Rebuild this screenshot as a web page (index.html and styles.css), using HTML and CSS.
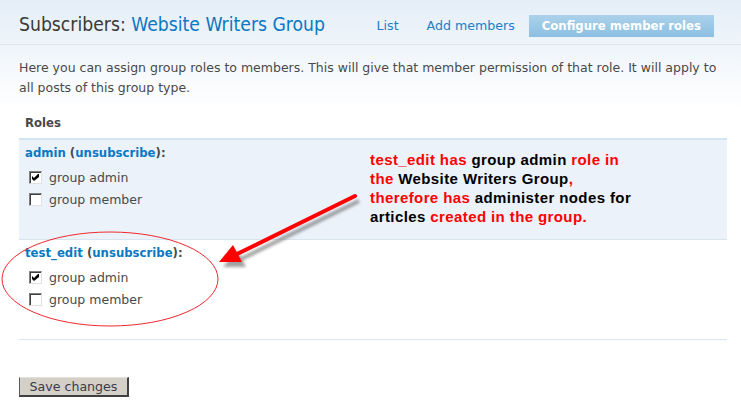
FILE: index.html
```html
<!DOCTYPE html>
<html>
<head>
<meta charset="utf-8">
<link rel="stylesheet" href="styles.css">
</head>
<body>
<div class="page">
  <div class="header">
    <h1 class="title">Subscribers: <a href="#" class="title-link">Website Writers Group</a></h1>
    <ul class="tabs">
      <li class="tab"><a href="#">List</a></li>
      <li class="tab"><a href="#">Add members</a></li>
      <li class="tab active"><a href="#">Configure member roles</a></li>
    </ul>
  </div>
  <div class="content">
    <p class="intro">Here you can assign group roles to members. This will give that member permission of that role. It will apply to all posts of this group type.</p>
    <table class="roles">
      <thead>
        <tr><th>Roles</th></tr>
      </thead>
      <tbody>
        <tr class="odd">
          <td>
            <div class="member"><a href="#">admin</a> (<a href="#">unsubscribe</a>):</div>
            <div class="option"><span class="box"><svg width="11" height="11" viewBox="0 0 11 11"><path d="M2 4 L4 6 L8 2 L9 2 L9 5 L4 9 L2 7 Z" fill="#000"/></svg></span>group admin</div>
            <div class="option"><span class="box"></span>group member</div>
          </td>
        </tr>
        <tr class="even">
          <td>
            <div class="member"><a href="#">test_edit</a> (<a href="#">unsubscribe</a>):</div>
            <div class="option"><span class="box"><svg width="11" height="11" viewBox="0 0 11 11"><path d="M2 4 L4 6 L8 2 L9 2 L9 5 L4 9 L2 7 Z" fill="#000"/></svg></span>group admin</div>
            <div class="option"><span class="box"></span>group member</div>
          </td>
        </tr>
      </tbody>
    </table>
    <button class="save" type="button">Save changes</button>
  </div>

  <svg class="overlay" width="741" height="417" viewBox="0 0 741 417">
    <defs>
      <filter id="blur" x="-20%" y="-20%" width="140%" height="140%">
        <feGaussianBlur stdDeviation="1.6"/>
      </filter>
    </defs>
    <ellipse cx="110" cy="279" rx="108" ry="47" fill="none" stroke="#f0282d" stroke-width="1"/>
    <g filter="url(#blur)" opacity="0.55" transform="translate(4,5)">
      <line x1="355" y1="196" x2="235" y2="255" stroke="#555" stroke-width="4"/>
      <polygon points="219,262 233,245 242,262" fill="#555"/>
    </g>
    <line x1="355" y1="196" x2="235" y2="255" stroke="#ff0000" stroke-width="4" stroke-linecap="round"/>
    <polygon points="219,262 233,245 242,262" fill="#ff0000"/>
  </svg>

  <div class="note">
    <span class="red">test_edit has</span> group admin <span class="red">role in</span><br>
    <span class="red">the</span> Website Writers Group<span class="red">,</span><br>
    <span class="red">therefore has</span> administer nodes for<br>
    articles <span class="red">created in the group.</span>
  </div>
</div>
</body>
</html>
```
FILE: styles.css
```css
html, body {
  margin: 0;
  padding: 0;
}
body {
  width: 741px;
  height: 417px;
  overflow: hidden;
  background: #ffffff;
  font-family: "DejaVu Sans", sans-serif;
  font-size: 12.5px;
  color: #494949;
}
a {
  color: #0a78c3;
  text-decoration: none;
}
.page {
  position: relative;
  width: 741px;
  height: 417px;
  background: linear-gradient(to bottom, #e5eef8 0px, #eef4fa 44px, #f6f9fc 70px, #ffffff 110px);
}
.header {
  display: flex;
  align-items: flex-start;
  height: 44px;
  border-bottom: 1px solid #dde6ee;
  padding-left: 19px;
  padding-right: 27px;
}
.title {
  margin: 0;
  padding-top: 13px;
  font-family: "DejaVu Sans Condensed", "DejaVu Sans", sans-serif;
  font-size: 19.2px;
  font-weight: normal;
  line-height: 24px;
  color: #3a3a3a;
}
.tabs {
  display: flex;
  list-style: none;
  margin: 15px 0 0 auto;
  padding: 0;
}
.tab a {
  display: block;
  height: 22px;
  line-height: 22px;
  padding: 0 10px 0 14px;
  font-size: 12.6px;
  color: #1d7ec8;
}
.tab:first-child a {
  padding-left: 0;
  padding-right: 14px;
}
.tab.active {
  margin-left: 4px;
}
.tab.active a {
  background: linear-gradient(to bottom, #abd2eb, #8dbee1);
  color: #ffffff;
  font-family: "DejaVu Sans Condensed", "DejaVu Sans", sans-serif;
  font-size: 13px;
  font-weight: bold;
  padding: 0 13px;
}
.content {
  padding: 0 14px 0 19px;
}
.intro {
  margin: 13px 0 0 0;
  line-height: 20px;
}
.roles {
  width: 100%;
  margin-top: 14px;
  border-collapse: collapse;
}
.roles th {
  text-align: left;
  padding: 1px 6px 5px 6px;
  line-height: 20px;
  font-family: "DejaVu Sans Condensed", "DejaVu Sans", sans-serif;
  font-size: 13px;
  font-weight: bold;
  color: #494949;
  border-bottom: 2px solid #d3e4f1;
}
.roles td {
  height: 99px;
  box-sizing: border-box;
  padding: 3px 6px 29px 6px;
  vertical-align: top;
  border-bottom: 1px solid #d8e5ef;
}
.roles tr.odd td {
  background: #ebf2f9;
}
.roles tr.even td {
  background: #ffffff;
}
.member {
  line-height: 20px;
  font-family: "DejaVu Sans Condensed", "DejaVu Sans", sans-serif;
  font-size: 13px;
  font-weight: bold;
  margin-bottom: 3px;
}
.option {
  display: flex;
  align-items: center;
  height: 22px;
  padding-left: 4px;
}
.box {
  display: inline-flex;
  align-items: center;
  justify-content: center;
  width: 11px;
  height: 11px;
  margin-right: 7px;
  background: #ffffff;
  border-top: 1px solid #808080;
  border-left: 1px solid #808080;
  border-right: 1px solid #e0e0e0;
  border-bottom: 1px solid #e0e0e0;
  box-shadow: inset 1px 1px 0 #404040;
}
.box svg {
  display: block;
}
.save {
  margin-top: 37px;
  width: 110px;
  height: 20px;
  padding: 0;
  font-family: "DejaVu Sans", sans-serif;
  font-size: 12.6px;
  line-height: 18px;
  color: #3b3b4a;
  background: #d4d0c8;
  border-top: 1px solid #e4e1db;
  border-left: 1px solid #5a5a5a;
  border-right: 2px solid #404040;
  border-bottom: 2px solid #404040;
}
.overlay {
  position: absolute;
  left: 0;
  top: 0;
  pointer-events: none;
}
.note {
  position: absolute;
  left: 370px;
  top: 150px;
  white-space: nowrap;
  font-family: "Liberation Sans", Arial, sans-serif;
  font-size: 15px;
  font-weight: bold;
  line-height: 19px;
  letter-spacing: 0.4px;
  color: #000000;
}
.red {
  color: #ff0000;
}
```
